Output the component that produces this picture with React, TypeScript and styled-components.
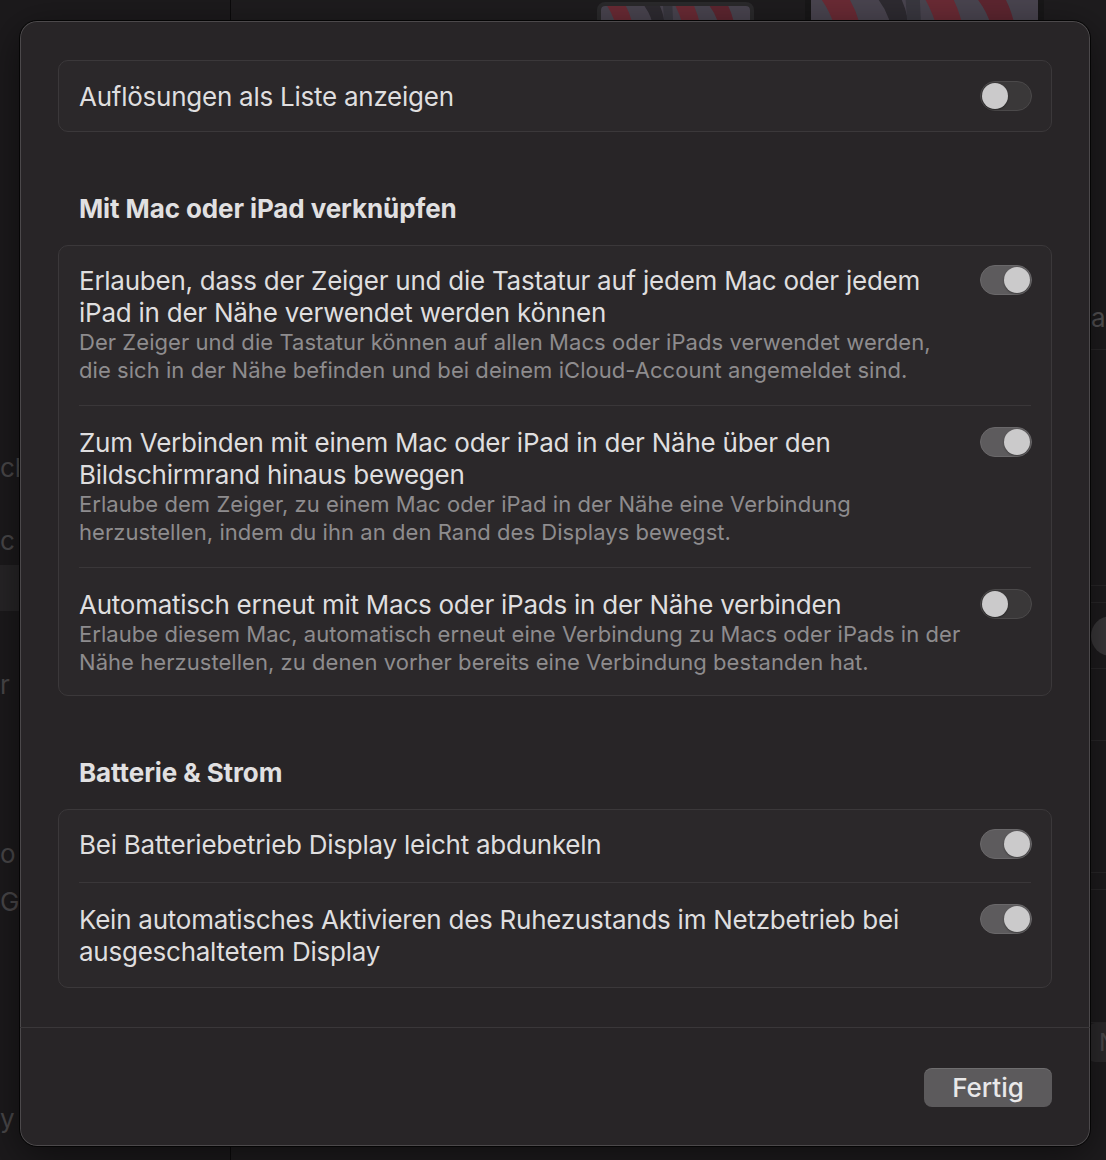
import React from "react";
import styled, { createGlobalStyle } from "styled-components";

const GlobalStyle = createGlobalStyle`
  html, body { margin: 0; padding: 0; background: #1e1c1e; }
  body { font-family: Inter, "Noto Sans", sans-serif; -webkit-font-smoothing: antialiased; }
  * { box-sizing: border-box; }
`;

const Screen = styled.div`
  position: relative;
  width: 1106px;
  height: 1160px;
  overflow: hidden;
  display: grid;
  grid-template-columns: 231px 1fr;
  background: #1e1c1e;
`;

const Sidebar = styled.aside`
  background: #1c1a1c;
  border-right: 1px solid #0b0a0b;
  padding-top: 444px;
  display: flex;
  flex-direction: column;
`;

const SideItem = styled.div<{ $gap: number; $selected?: boolean }>`
  height: 46px;
  margin-top: ${(p) => p.$gap}px;
  display: flex;
  align-items: center;
  font-size: 26px;
  color: #4a484a;
  white-space: nowrap;
  background: ${(p) => (p.$selected ? "#272527" : "transparent")};
`;

const Main = styled.main`
  display: flex;
  flex-direction: column;
  min-width: 0;
`;

const Thumbs = styled.div`
  height: 279px;
  display: flex;
  align-items: flex-start;
  gap: 51px;
  padding-left: 366px;
`;

const Thumb = styled.div<{ $w: number; $h: number; $top: number; $frame: string; $bw: number }>`
  width: ${(p) => p.$w}px;
  height: ${(p) => p.$h}px;
  margin-top: ${(p) => p.$top}px;
  border: ${(p) => p.$bw}px solid ${(p) => p.$frame};
  border-radius: 8px;
  overflow: hidden;
  svg { display: block; width: 100%; height: 100%; }
`;

const BgRow = styled.div<{ $h: number }>`
  height: ${(p) => p.$h}px;
  border-bottom: 1px solid #2a282a;
  display: flex;
  align-items: center;
  padding: 6px 0 0 860px;
  white-space: nowrap;
  overflow: hidden;
  font-size: 26px;
  color: #565456;
`;

const BgKnob = styled.div`
  width: 40px;
  height: 40px;
  border-radius: 50%;
  background: #3b393b;
  flex: none;
  margin-top: -6px;
`;

const BgButton = styled.div`
  height: 39px;
  margin-left: 858px;
  padding-left: 10px;
  width: 80px;
  background: #2c2a2c;
  border-radius: 6px;
  display: flex;
  align-items: center;
  font-size: 24px;
  color: #4c4a4c;
`;

const Sheet = styled.section`
  position: absolute;
  left: 19px;
  top: 20px;
  width: 1072px;
  height: 1127px;
  background: #282527;
  border: 1px solid #050505;
  border-radius: 18px;
  box-shadow: inset 0 0 0 1px rgba(255, 255, 255, 0.17), 0 10px 40px rgba(0, 0, 0, 0.5);
  display: flex;
  flex-direction: column;
`;

const SheetBody = styled.div`
  padding: 39px 38px 0;
  display: flex;
  flex-direction: column;
`;

const Group = styled.div`
  border: 1px solid #3b383a;
  border-radius: 10px;
  background: #2b282a;
  display: flex;
  flex-direction: column;
`;

const Row = styled.div<{ $top: number; $bottom: number }>`
  display: flex;
  align-items: flex-start;
  gap: 20px;
  padding: ${(p) => p.$top}px 19px ${(p) => p.$bottom}px 20px;
`;

const Divider = styled.div`
  height: 1px;
  margin: 2px 20px;
  background: #3a3739;
`;

const TextCol = styled.div`
  flex: 1;
  min-width: 0;
  display: flex;
  flex-direction: column;
`;

const Title = styled.div`
  font-size: 26px;
  line-height: 32px;
  color: #dfdedf;
  white-space: nowrap;
  letter-spacing: -0.25px;
`;

const Sub = styled.div`
  font-size: 22px;
  line-height: 28px;
  color: #8e8c8e;
  white-space: nowrap;
  letter-spacing: 0.05px;

  ${Title} + & {
    margin-top: -1px;
  }
`;

const Heading = styled.h2`
  margin: 61px 0 20px;
  padding-left: 21px;
  font-size: 26px;
  line-height: 32px;
  font-weight: 700;
  color: #e1e0e1;
  letter-spacing: -0.1px;
`;

const Track = styled.div<{ $on: boolean }>`
  flex: none;
  width: 52px;
  height: 30px;
  border-radius: 15px;
  padding: 1px;
  display: flex;
  justify-content: ${(p) => (p.$on ? "flex-end" : "flex-start")};
  align-items: center;
  background: ${(p) => (p.$on ? "#5d5b5d" : "#3a3839")};
  border: 1px solid ${(p) => (p.$on ? "#6a686a" : "#4b494a")};
`;

const Knob = styled.div`
  width: 26px;
  height: 26px;
  border-radius: 50%;
  background: #cbcacb;
  box-shadow: 0 1px 2px rgba(0, 0, 0, 0.35);
`;

const Footer = styled.footer`
  margin-top: auto;
  border-top: 1px solid #3a3739;
  padding: 40px 38px 39px;
  display: flex;
  justify-content: flex-end;
`;

const Button = styled.button`
  width: 128px;
  height: 39px;
  border: none;
  border-radius: 8px;
  background: #5c5a5c;
  box-shadow: inset 0 1px 0 rgba(255, 255, 255, 0.12);
  color: #e9e8e9;
  font-family: inherit;
  font-size: 26px;
  font-weight: 500;
  cursor: pointer;
`;

const Toggle = ({ on }: { on: boolean }) => (
  <Track $on={on}>
    <Knob />
  </Track>
);

const Wallpaper = () => (
  <svg viewBox="0 0 240 140" preserveAspectRatio="none">
    <rect width="240" height="140" fill="#4a4550" />
    <path d="M10 0 Q40 40 20 90 L45 90 Q65 40 40 0 Z" fill="#6b2b35" />
    <path d="M70 0 Q95 30 80 70 L100 70 Q110 30 95 0 Z" fill="#2e2b31" />
    <path d="M120 0 Q150 50 130 120 L160 120 Q175 50 150 0 Z" fill="#6b2b35" />
    <path d="M175 0 Q205 35 190 100 L215 100 Q225 35 205 0 Z" fill="#5e2630" />
    <path d="M100 0 L115 0 L118 60 L104 60 Z" fill="#3a3840" />
  </svg>
);

type Item = { title: string[]; sub?: string[]; on: boolean };

const linkItems: Item[] = [
  {
    title: [
      "Erlauben, dass der Zeiger und die Tastatur auf jedem Mac oder jedem",
      "iPad in der Nähe verwendet werden können",
    ],
    sub: [
      "Der Zeiger und die Tastatur können auf allen Macs oder iPads verwendet werden,",
      "die sich in der Nähe befinden und bei deinem iCloud-Account angemeldet sind.",
    ],
    on: true,
  },
  {
    title: [
      "Zum Verbinden mit einem Mac oder iPad in der Nähe über den",
      "Bildschirmrand hinaus bewegen",
    ],
    sub: [
      "Erlaube dem Zeiger, zu einem Mac oder iPad in der Nähe eine Verbindung",
      "herzustellen, indem du ihn an den Rand des Displays bewegst.",
    ],
    on: true,
  },
  {
    title: ["Automatisch erneut mit Macs oder iPads in der Nähe verbinden"],
    sub: [
      "Erlaube diesem Mac, automatisch erneut eine Verbindung zu Macs oder iPads in der",
      "Nähe herzustellen, zu denen vorher bereits eine Verbindung bestanden hat.",
    ],
    on: false,
  },
];

const batteryItems: Item[] = [
  { title: ["Bei Batteriebetrieb Display leicht abdunkeln"], on: true },
  {
    title: [
      "Kein automatisches Aktivieren des Ruhezustands im Netzbetrieb bei",
      "ausgeschaltetem Display",
    ],
    on: true,
  },
];

const sideItems = [
  { label: "ch", gap: 0 },
  { label: "c", gap: 27 },
  { label: "", gap: 2, selected: true },
  { label: "", gap: 2 },
  { label: "r", gap: 2 },
  { label: "", gap: 2 },
  { label: "", gap: 27 },
  { label: "o", gap: 2 },
  { label: "G", gap: 2 },
  { label: "", gap: 27 },
  { label: "", gap: 2 },
  { label: "", gap: 2 },
  { label: "y", gap: 2 },
];

const ItemGroup = ({ items }: { items: Item[] }) => (
  <Group>
    {items.map((it, i) => (
      <React.Fragment key={i}>
        {i > 0 && <Divider />}
        <Row $top={19} $bottom={19}>
          <TextCol>
            {it.title.map((t) => (
              <Title key={t}>{t}</Title>
            ))}
            {it.sub?.map((s) => (
              <Sub key={s}>{s}</Sub>
            ))}
          </TextCol>
          <Toggle on={it.on} />
        </Row>
      </React.Fragment>
    ))}
  </Group>
);

export default function App() {
  return (
    <>
      <GlobalStyle />
      <Screen>
        <Sidebar>
          {sideItems.map((s, i) => (
            <SideItem key={i} $gap={s.gap} $selected={s.selected}>
              {s.label}
            </SideItem>
          ))}
        </Sidebar>
        <Main>
          <Thumbs>
            <Thumb $w={157} $h={110} $top={2} $frame="#2b2a2c" $bw={4}>
              <Wallpaper />
            </Thumb>
            <Thumb $w={239} $h={150} $top={-8} $frame="#181718" $bw={6}>
              <Wallpaper />
            </Thumb>
          </Thumbs>
          <BgRow $h={71}>auto</BgRow>
          <BgRow $h={236} />
          <BgRow $h={17} />
          <BgRow $h={66}>
            <BgKnob />
          </BgRow>
          <BgRow $h={72} />
          <BgRow $h={132} />
          <BgRow $h={17} />
          <BgRow $h={133} />
          <BgButton>Nacht</BgButton>
        </Main>
        <Sheet>
          <SheetBody>
            <Group>
              <Row $top={20} $bottom={18}>
                <TextCol>
                  <Title>Auflösungen als Liste anzeigen</Title>
                </TextCol>
                <Toggle on={false} />
              </Row>
            </Group>
            <Heading>Mit Mac oder iPad verknüpfen</Heading>
            <ItemGroup items={linkItems} />
            <Heading>Batterie &amp; Strom</Heading>
            <ItemGroup items={batteryItems} />
          </SheetBody>
          <Footer>
            <Button>Fertig</Button>
          </Footer>
        </Sheet>
      </Screen>
    </>
  );
}
